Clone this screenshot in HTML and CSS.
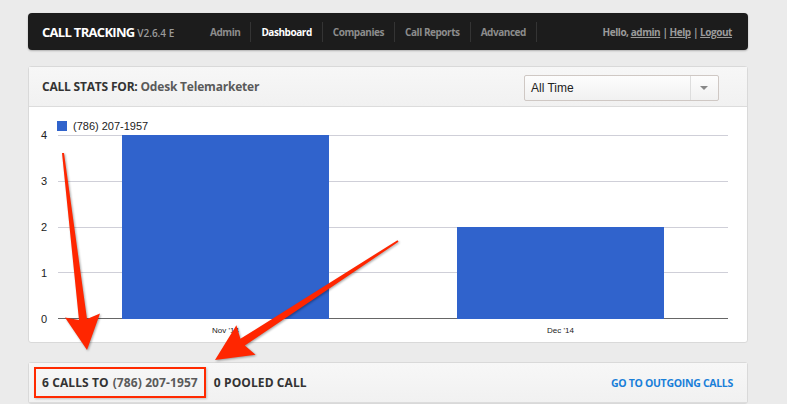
FILE: index.html
```html
<!DOCTYPE html>
<html lang="en">
<head>
   <meta charset="UTF-8">
   <title>Call Tracking - Dashboard</title>
   <link rel="stylesheet" href="styles.css">
</head>
<body>
   <div class="page">
      <header class="topbar">
         <div class="brand">CALL TRACKING <small>V2.6.4 E</small></div>
         <nav class="mainnav">
            <a href="#">Admin</a>
            <a href="#" class="active">Dashboard</a>
            <a href="#">Companies</a>
            <a href="#">Call Reports</a>
            <a href="#">Advanced</a>
         </nav>
         <div class="userlinks">Hello, <a href="#">admin</a> | <a href="#">Help</a> | <a href="#">Logout</a></div>
      </header>

      <section class="panel">
         <div class="panel-head">
            <h2>CALL STATS FOR: <span>Odesk Telemarketer</span></h2>
            <div class="select">
               <span>All Time</span>
               <b class="caret"></b>
            </div>
         </div>
         <div class="chart">
            <div class="legend"><i></i>(786) 207-1957</div>
            <div class="plot-wrap">
               <div class="yaxis">
                  <span>4</span><span>3</span><span>2</span><span>1</span><span>0</span>
               </div>
               <div class="plot">
                  <div class="gridlines">
                     <i></i><i></i><i></i><i></i><i class="base"></i>
                  </div>
                  <div class="bars">
                     <div class="slot"><div class="bar" style="height:100%"></div></div>
                     <div class="slot"><div class="bar" style="height:50%"></div></div>
                  </div>
               </div>
            </div>
            <div class="xaxis"><span>Nov '14</span><span>Dec '14</span></div>
         </div>
      </section>

      <section class="panel panel-calls">
         <div class="panel-head calls-head">
            <h2 class="calls-to">6 CALLS TO <span>(786) 207-1957</span></h2>
            <h2>0 POOLED CALL</h2>
            <a href="#" class="outgoing">GO TO OUTGOING CALLS</a>
         </div>
      </section>

      <!-- red callout arrows -->
      <svg class="marks" width="787" height="404" viewBox="0 0 787 404">
         <polygon points="62,153 79,320 65,317.6 87,350 100,313.4 87,319 64,153"/>
         <polygon points="397.5,240.2 240.4,338.8 236.4,325.3 215,360 255.6,354.7 244.8,345.6 398.5,241.8"/>
      </svg>
   </div>
</body>
</html>
```

FILE: styles.css
```css
body {
   margin: 0;
   height: 404px;
   overflow: hidden;
   background: #ebebeb;
   font-family: "Open Sans", "Liberation Sans", sans-serif;
}
.page {
   width: 720px;
   padding: 13px 0 0 28px;
}
.topbar {
   display: flex;
   align-items: center;
   height: 37px;
   padding: 0 16px 0 14px;
   background: #1c1c1c;
   border-radius: 4px;
   box-shadow: 0 1px 2px rgba(0, 0, 0, .25);
}
.brand {
   width: 158px;
   color: #fff;
   font-size: 13px;
   font-weight: 700;
   letter-spacing: -0.7px;
   white-space: nowrap;
}
.brand small {
   color: #9a9a9a;
   font-size: 10px;
   font-weight: 600;
   letter-spacing: 0;
}
.mainnav {
   display: flex;
}
.mainnav a {
   padding: 0 10px;
   border-right: 1px solid #343434;
   color: #8c8c8c;
   font-size: 10px;
   font-weight: 700;
   letter-spacing: -0.45px;
   line-height: 20px;
   text-decoration: none;
}
.mainnav a.active {
   color: #fff;
}
.userlinks {
   margin-left: auto;
   color: #9a9a9a;
   font-size: 10px;
   font-weight: 700;
   letter-spacing: -0.45px;
}
.userlinks a {
   color: #9a9a9a;
}
.panel {
   margin-top: 16px;
   background: #fff;
   border: 1px solid #d9d9d9;
   border-radius: 3px;
}
.panel-calls {
   margin-top: 19px;
}
.panel-head {
   display: flex;
   align-items: center;
   height: 39px;
   padding: 0 28px 0 13px;
   background: linear-gradient(#f7f7f7, #f1f1f1);
   border-bottom: 1px solid #dcdcdc;
}
.panel-head h2 {
   margin: 0;
   color: #333;
   font-size: 12px;
   font-weight: 700;
   letter-spacing: -0.2px;
}
.panel-head h2 span {
   color: #5a5a5a;
}
.select {
   display: flex;
   margin: 3px 0 0 auto;
   width: 193px;
   height: 24px;
   background: linear-gradient(#fdfdfd, #f1f1f1);
   border: 1px solid #cfc8c4;
   border-radius: 2px;
}
.select span {
   flex: 1;
   padding-left: 6px;
   color: #222;
   font-family: "Liberation Sans", Arial, sans-serif;
   font-size: 12px;
   line-height: 24px;
}
.caret {
   position: relative;
   width: 27px;
   border-left: 1px solid #ddd;
}
.caret::after {
   content: "";
   position: absolute;
   left: 9px;
   top: 10px;
   border: 4px solid transparent;
   border-top: 4px solid #888;
}
.chart {
   height: 235px;
   padding: 0 19px 0 12px;
   font-family: "Liberation Sans", Arial, sans-serif;
}
.legend {
   display: flex;
   align-items: center;
   padding: 13px 0 0 16px;
   color: #222;
   font-size: 11px;
   line-height: 12px;
}
.legend i {
   width: 10px;
   height: 10px;
   margin-right: 6px;
   background: #3063cc;
}
.plot-wrap {
   display: flex;
   margin-top: 3px;
}
.yaxis {
   display: flex;
   flex-direction: column;
   justify-content: space-between;
   width: 17px;
   height: 196px;
   margin-top: -6px;
   color: #222;
   font-size: 11px;
   line-height: 12px;
}
.plot {
   display: grid;
   flex: 1;
   height: 184px;
}
.gridlines,
.bars {
   grid-area: 1 / 1;
}
.gridlines {
   display: flex;
   flex-direction: column;
   justify-content: space-between;
}
.gridlines i {
   height: 1px;
   background: #cfcfd8;
}
.gridlines i.base {
   background: #666;
}
.bars {
   display: flex;
}
.slot {
   display: flex;
   flex: 1;
   justify-content: center;
   align-items: flex-end;
}
.bar {
   width: 61.6%;
   background: #3063cc;
}
.xaxis {
   display: flex;
   margin-left: 17px;
   color: #222;
   font-size: 8px;
   line-height: 11px;
}
.xaxis span {
   flex: 1;
   text-align: center;
}
.calls-head {
   padding: 0 14px 0 5px;
}
.calls-to {
   display: flex;
   align-items: center;
   height: 27px;
   padding: 0 6px;
   border: 2px solid #ff2a00;
   box-shadow: 1px 1px 2px rgba(0, 0, 0, .2);
}
.calls-head h2 {
   letter-spacing: 0.1px;
}
.calls-to span {
   margin-left: 4px;
}
.calls-to + h2 {
   margin-left: 8px;
}
.outgoing {
   margin-left: auto;
   color: #1a7fd9;
   font-size: 10.5px;
   font-weight: 700;
   text-decoration: none;
   letter-spacing: -0.3px;
}
.marks {
   position: absolute;
   top: 0;
   left: 0;
   fill: #ff2600;
   filter: drop-shadow(1px 1px 1px rgba(0, 0, 0, .35));
}
```
